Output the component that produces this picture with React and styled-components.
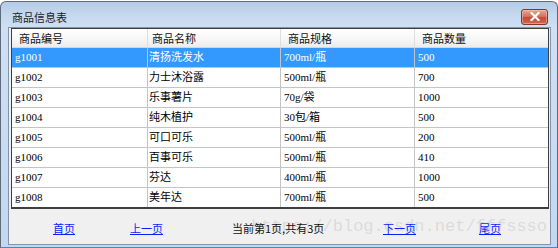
import React from 'react'
import styled, { createGlobalStyle } from 'styled-components'

const GlobalStyle = createGlobalStyle`
    html, body {
        margin: 0;
        padding: 0;
        background: #ffffff;
    }
    body {
        width: 558px;
        height: 248px;
        overflow: hidden;
        font-family: "Noto Sans CJK SC", sans-serif;
    }
`

const products = [
    { id: 'g1001', name: '清扬洗发水', spec: '700ml/瓶', qty: '500' },
    { id: 'g1002', name: '力士沐浴露', spec: '500ml/瓶', qty: '700' },
    { id: 'g1003', name: '乐事薯片', spec: '70g/袋', qty: '1000' },
    { id: 'g1004', name: '纯木植护', spec: '30包/箱', qty: '500' },
    { id: 'g1005', name: '可口可乐', spec: '500ml/瓶', qty: '200' },
    { id: 'g1006', name: '百事可乐', spec: '500ml/瓶', qty: '410' },
    { id: 'g1007', name: '芬达', spec: '400ml/瓶', qty: '1000' },
    { id: 'g1008', name: '美年达', spec: '700ml/瓶', qty: '500' },
]

const headers = ['商品编号', '商品名称', '商品规格', '商品数量']

function App() {
    const selected = 0

    return (
        <>
            <GlobalStyle />
            <Window>
                <TitleBar>
                    <Title>商品信息表</Title>
                    <CloseButton aria-label="close">
                        <svg width="10" height="9" viewBox="0 0 10 9">
                            <path d="M1.5 1 L8.5 8 M8.5 1 L1.5 8" stroke="#ffffff" strokeWidth="2.2" strokeLinecap="square" />
                        </svg>
                    </CloseButton>
                </TitleBar>
                <Client>
                    <Table>
                        <HeaderRow>
                            {headers.map((h) => (
                                <HeaderCell key={h}>{h}</HeaderCell>
                            ))}
                        </HeaderRow>
                        {products.map((p, i) => (
                            <Row key={p.id} $selected={i === selected} $last={i === products.length - 1}>
                                <Cell>{p.id}</Cell>
                                <Cell>{p.name}</Cell>
                                <Cell>{p.spec}</Cell>
                                <Cell>{p.qty}</Cell>
                            </Row>
                        ))}
                    </Table>
                    <Footer>
                        <PageLink href="#">首页</PageLink>
                        <PageLink href="#">上一页</PageLink>
                        <Status>当前第1页,共有3页</Status>
                        <PageLink href="#">下一页</PageLink>
                        <PageLink href="#">尾页</PageLink>
                        <Watermark>https://blog.csdn.net/fffssso</Watermark>
                    </Footer>
                </Client>
            </Window>
        </>
    )
}

export default App

const Window = styled.div`
    box-sizing: border-box;
    width: 558px;
    height: 247px;
    margin-top: 1px;
    border: 1px solid #5f6b7a;
    border-bottom-color: #3b8fc4;
    border-radius: 6px 6px 0 0;
    background: linear-gradient(180deg, #b4cbe6 0px, #c6d9ef 14px, #cfe0f3 26px, #c3d8ee 100%);
    padding: 0 6px 2px 7px;
    display: flex;
    flex-direction: column;
`

const TitleBar = styled.div`
    height: 25px;
    display: flex;
    align-items: center;
    justify-content: space-between;
    padding: 0 3px 0 4px;
`

const Title = styled.span`
    font-size: 11px;
    line-height: 14px;
    color: #1b1b1b;
    margin-top: 4px;
`

const CloseButton = styled.button`
    box-sizing: border-box;
    width: 27px;
    height: 16px;
    margin-top: 4px;
    padding: 0;
    border: 1px solid #83352a;
    border-radius: 3px;
    background: linear-gradient(180deg, #e9a797 0%, #d77260 45%, #c24a36 55%, #cf6a50 100%);
    box-shadow: inset 0 0 0 1px rgba(255, 210, 200, 0.45);
    display: flex;
    align-items: center;
    justify-content: center;
    cursor: pointer;
`

const Client = styled.div`
    flex: 1;
    border: 1px solid #8095ad;
    background: #f0f0f0;
    padding: 0 0 0 2px;
    display: flex;
    flex-direction: column;
`

const Table = styled.div`
    box-sizing: border-box;
    width: 538px;
    border: 1px solid #3f3f3f;
    border-bottom-width: 2px;
    background: #ffffff;
    font-family: "Liberation Serif", "Noto Sans CJK SC", serif;
    font-size: 11px;
`

const HeaderRow = styled.div`
    display: grid;
    grid-template-columns: 136px 133px 134px 1fr;
    height: 19px;
    box-sizing: border-box;
    border-bottom: 1px solid #d6d6d6;
    background: linear-gradient(180deg, #ffffff 0%, #f7f7f7 55%, #ececec 100%);
`

const HeaderCell = styled.div`
    box-sizing: border-box;
    padding-left: 7px;
    font-family: "Noto Sans CJK SC", sans-serif;
    font-size: 11px;
    line-height: 18px;
    color: #111111;
    border-right: 1px solid #dedede;

    &:nth-child(2) {
        padding-left: 4px;
    }

    &:last-child {
        border-right: none;
    }
`

const Row = styled.div`
    display: grid;
    grid-template-columns: 136px 133px 134px 1fr;
    height: ${(p) => (p.$last ? '19px' : '20px')};
    box-sizing: border-box;
    border-bottom: ${(p) => (p.$last ? 'none' : '1px solid #c4c4c4')};
    background: ${(p) => (p.$selected ? '#3399ff' : '#ffffff')};
    color: ${(p) => (p.$selected ? '#ffffff' : '#000000')};
`

const Cell = styled.div`
    box-sizing: border-box;
    padding-left: 3px;
    line-height: 19px;
    white-space: nowrap;
    border-right: 1px solid #c4c4c4;

    &:nth-child(2) {
        padding-left: 1px;
    }

    &:last-child {
        border-right: none;
    }
`

const Footer = styled.div`
    position: relative;
    flex: 1;
    display: grid;
    grid-template-columns: 77px 102px 151px 96px 1fr;
    align-items: center;
    justify-items: start;
    padding-left: 42px;
    font-size: 11px;
    line-height: 14px;
    padding-top: 2px;
`

const PageLink = styled.a`
    position: relative;
    z-index: 1;
    color: #0a1ef5;
    text-decoration: underline;
    text-underline-offset: 1px;
`

const Status = styled.span`
    position: relative;
    z-index: 1;
    color: #111111;
`

const Watermark = styled.span`
    position: absolute;
    right: 3px;
    top: 8px;
    font-family: "Liberation Mono", monospace;
    font-size: 17px;
    line-height: 20px;
    color: rgba(160, 160, 160, 0.28);
    pointer-events: none;
    white-space: nowrap;
`
